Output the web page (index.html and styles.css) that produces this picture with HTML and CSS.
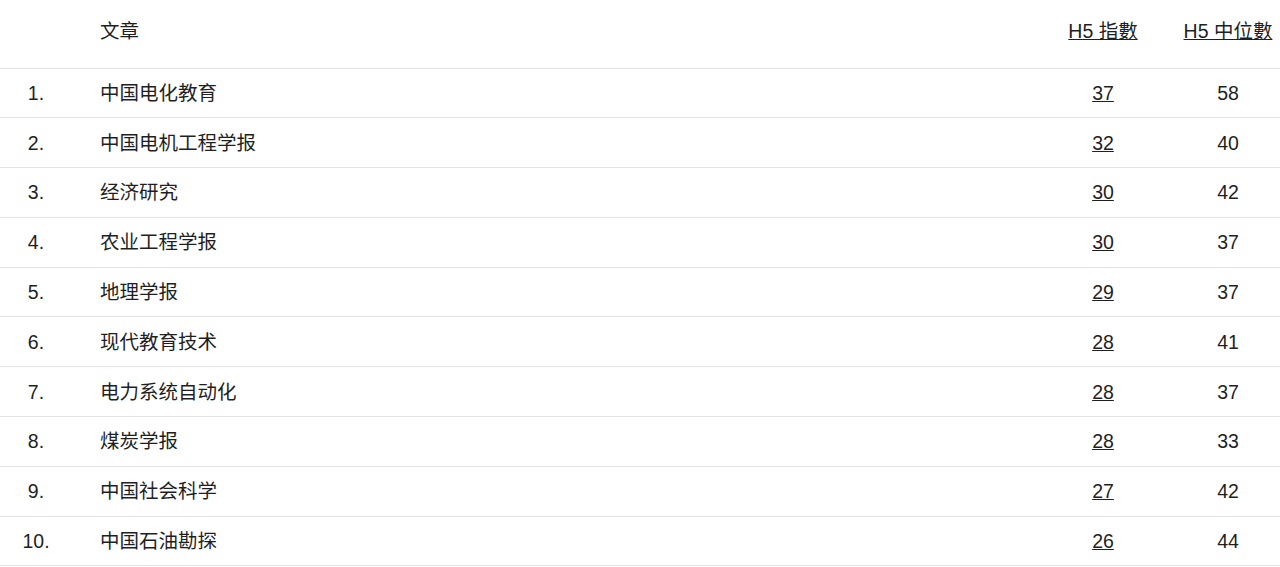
FILE: index.html
```html
<!DOCTYPE html>
<html lang="zh">
<head>
<meta charset="utf-8">
<title>H5 指數</title>
<link rel="stylesheet" href="styles.css">
</head>
<body>
<table class="metrics">
  <colgroup>
    <col class="c-rank">
    <col class="c-title">
    <col class="c-idx">
    <col class="c-med">
  </colgroup>
  <thead>
    <tr>
      <th class="rank"></th>
      <th class="title">文章</th>
      <th class="num"><a href="#">H5 指數</a></th>
      <th class="num med"><a href="#">H5 中位數</a></th>
    </tr>
  </thead>
  <tbody>
    <tr><td class="rank">1.</td><td class="title">中国电化教育</td><td class="num"><a href="#">37</a></td><td class="num med">58</td></tr>
    <tr><td class="rank">2.</td><td class="title">中国电机工程学报</td><td class="num"><a href="#">32</a></td><td class="num med">40</td></tr>
    <tr><td class="rank">3.</td><td class="title">经济研究</td><td class="num"><a href="#">30</a></td><td class="num med">42</td></tr>
    <tr><td class="rank">4.</td><td class="title">农业工程学报</td><td class="num"><a href="#">30</a></td><td class="num med">37</td></tr>
    <tr><td class="rank">5.</td><td class="title">地理学报</td><td class="num"><a href="#">29</a></td><td class="num med">37</td></tr>
    <tr><td class="rank">6.</td><td class="title">现代教育技术</td><td class="num"><a href="#">28</a></td><td class="num med">41</td></tr>
    <tr><td class="rank">7.</td><td class="title">电力系统自动化</td><td class="num"><a href="#">28</a></td><td class="num med">37</td></tr>
    <tr><td class="rank">8.</td><td class="title">煤炭学报</td><td class="num"><a href="#">28</a></td><td class="num med">33</td></tr>
    <tr><td class="rank">9.</td><td class="title">中国社会科学</td><td class="num"><a href="#">27</a></td><td class="num med">42</td></tr>
    <tr><td class="rank">10.</td><td class="title">中国石油勘探</td><td class="num"><a href="#">26</a></td><td class="num med">44</td></tr>
  </tbody>
</table>
</body>
</html>
```
FILE: styles.css
```css
html, body {
  margin: 0;
  padding: 0;
  background: #fff;
}
body {
  font-family: "Liberation Sans", Arial, "Noto Sans CJK SC", sans-serif;
  font-size: 19.5px;
  color: #1f1f1f;
}
.metrics {
  width: 1280px;
  border-collapse: collapse;
  table-layout: fixed;
}
.c-rank { width: 72px; }
.c-idx { width: 146px; }
.c-med { width: 104px; }
.metrics th {
  font-weight: normal;
  text-align: left;
  height: 68px;
  padding: 19px 0 0 0;
  vertical-align: top;
  box-sizing: border-box;
  line-height: 24px;
}
.metrics td {
  height: 49.8px;
  padding: 0;
  border-top: 1px solid #e3e3e3;
  vertical-align: middle;
  box-sizing: border-box;
  line-height: 24px;
}
.metrics tbody tr:last-child td {
  border-bottom: 1px solid #e3e3e3;
}
.rank { text-align: center; }
.metrics .title { padding-left: 28px; text-align: left; }
.metrics .num { text-align: center; }
.metrics a {
  color: #1f1f1f;
  text-decoration: underline;
}
```
